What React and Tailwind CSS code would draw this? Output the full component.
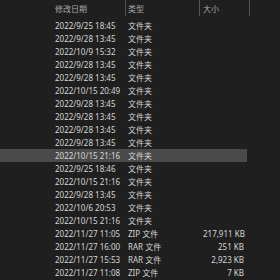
import React from "react";

const rows = [
  ["2022/9/25 18:45", "文件夹", ""],
  ["2022/9/28 13:45", "文件夹", ""],
  ["2022/10/9 15:32", "文件夹", ""],
  ["2022/9/28 13:45", "文件夹", ""],
  ["2022/9/28 13:45", "文件夹", ""],
  ["2022/10/15 20:49", "文件夹", ""],
  ["2022/9/28 13:45", "文件夹", ""],
  ["2022/9/28 13:45", "文件夹", ""],
  ["2022/9/28 13:45", "文件夹", ""],
  ["2022/9/28 13:45", "文件夹", ""],
  ["2022/10/15 21:16", "文件夹", "", true],
  ["2022/9/25 18:46", "文件夹", ""],
  ["2022/10/15 21:16", "文件夹", ""],
  ["2022/9/28 13:45", "文件夹", ""],
  ["2022/10/6 20:53", "文件夹", ""],
  ["2022/10/15 21:16", "文件夹", ""],
  ["2022/11/27 11:05", "ZIP 文件", "217,911 KB"],
  ["2022/11/27 16:00", "RAR 文件", "251 KB"],
  ["2022/11/27 15:53", "RAR 文件", "2,923 KB"],
  ["2022/11/27 11:08", "ZIP 文件", "7 KB"],
];

export default function App() {
  return (
    <div
      className="w-[280px] h-[280px] overflow-hidden bg-[#1f1f1f] text-[8px] leading-[13px]"
      style={{ fontFamily: '"Noto Sans", "Noto Sans CJK SC", sans-serif' }}
    >
      <div className="flex h-[19px] text-[#a9a9a9]">
        <div className="w-[126px] h-[16px] border-r border-[#555555] pl-[55px] flex items-center">修改日期</div>
        <div className="w-[74px] h-[16px] border-r border-[#555555] pl-[2px] flex items-center">类型</div>
        <div className="w-[50px] h-[16px] border-r border-[#555555] pl-[3px] flex items-center">大小</div>
      </div>
      {rows.map(([d, t, s, hl], i) => (
        <div
          key={i}
          className={`flex h-[13px] w-[247px] items-center text-[#d6d6d6] ${hl ? "bg-[#4a4a4a]" : ""}`}
        >
          <div className="w-[128px] pl-[55px] whitespace-nowrap">{d}</div>
          <div className="w-[75px] whitespace-nowrap">{t}</div>
          <div className="w-[41px] text-right whitespace-nowrap">{s}</div>
        </div>
      ))}
    </div>
  );
}
